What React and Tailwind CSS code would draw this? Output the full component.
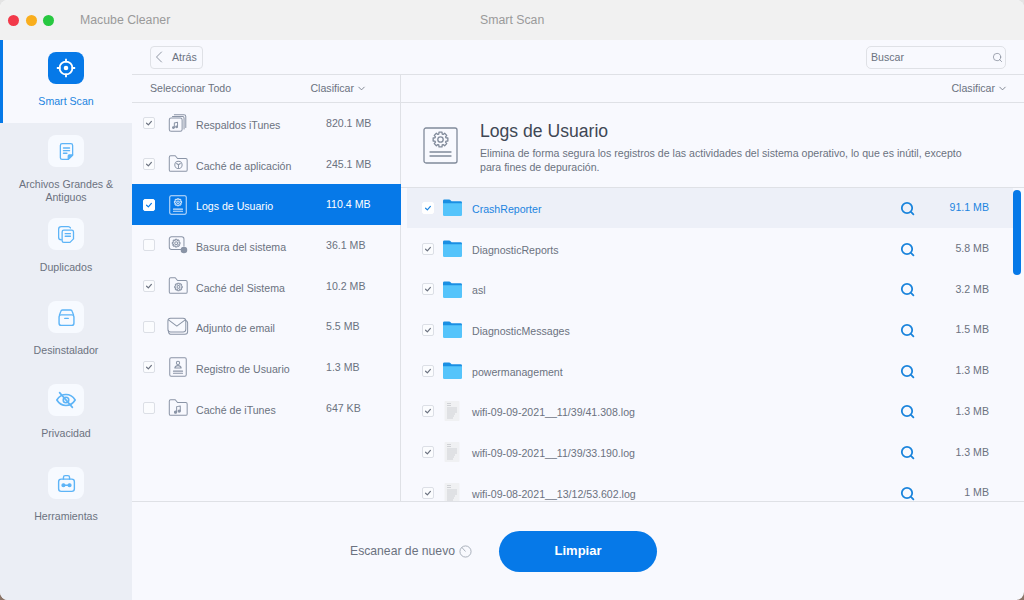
import { ChevronLeft, ChevronDown, Search } from 'lucide-react'

function Stroke({ children, size = 22, color = '#8a94a6', sw = 1.1, box = 24 }) {
  return (
    <svg width={size} height={size} viewBox={`0 0 ${box} ${box}`} fill="none" stroke={color} strokeWidth={sw} strokeLinecap="round" strokeLinejoin="round">
      {children}
    </svg>
  )
}

// outline of a small cog, eight teeth
function gearPath(cx, cy, r) {
  const pts = []
  for (let i = 0; i < 8; i++) {
    const a = (i * Math.PI) / 4
    const steps = [[-0.3, 0.76], [-0.2, 1], [0.2, 1], [0.3, 0.76]]
    steps.forEach(([da, k]) => {
      pts.push(`${(cx + Math.cos(a + da) * r * k).toFixed(2)} ${(cy + Math.sin(a + da) * r * k).toFixed(2)}`)
    })
  }
  return `M${pts.join('L')}Z`
}

const Gear = ({ cx = 12, cy = 10, r = 4 }) => (
  <g>
    <path d={gearPath(cx, cy, r)} />
    <circle cx={cx} cy={cy} r={r * 0.36} />
  </g>
)

const FolderLine = () => (
  <path d="M2.5 4.5A1.5 1.5 0 0 1 4 3h5l2.5 3h9A1.5 1.5 0 0 1 22 7.5v11a1.5 1.5 0 0 1-1.5 1.5H4a1.5 1.5 0 0 1-1.5-1.5z" />
)

const listIcons = {
  itunes: c => (
    <Stroke color={c}>
      <path d="M8 3h10.5a2 2 0 0 1 2 2v12" />
      <path d="M6 5h11a1.6 1.6 0 0 1 1.6 1.6v12" />
      <rect x="2.5" y="6.5" width="14" height="14.5" rx="2" />
      <path d="M8 17v-5l3.5-.8v5" />
      <circle cx="7" cy="17" r="1" fill={c} />
      <circle cx="10.5" cy="16.2" r="1" fill={c} />
    </Stroke>
  ),
  appcache: c => (
    <Stroke color={c}>
      <FolderLine />
      <circle cx="12.5" cy="13" r="4" />
      <path d="M10.5 11.5l2 1.3 2-1.3M12.5 12.8v3" />
    </Stroke>
  ),
  logs: c => (
    <Stroke color={c}>
      <rect x="3" y="2" width="18" height="20" rx="1.5" />
      <Gear cx={12} cy={9} r={4} />
      <path d="M7 16.5h10M7 18.8h10" />
    </Stroke>
  ),
  trash: c => (
    <Stroke color={c}>
      <path d="M15 17H5a2.5 2.5 0 0 1-2.5-2.5v-9A2.5 2.5 0 0 1 5 3h11a2.5 2.5 0 0 1 2.5 2.5V13" />
      <Gear cx={10} cy={10} r={4.3} />
      <circle cx="18.5" cy="17.5" r="3.6" fill={c} stroke="none" />
    </Stroke>
  ),
  syscache: c => (
    <Stroke color={c}>
      <FolderLine />
      <Gear cx={12.5} cy={13} r={4.2} />
    </Stroke>
  ),
  mail: c => (
    <Stroke color={c} size={25} sw={1.1}>
      <rect x="1" y="3" width="19.5" height="15" rx="3" />
      <path d="M2 5l8.700 6.5L19.5 5" />
      <path d="M1.5 16.5c0 2.5 1.5 4 3.5 4h14.5a3 3 0 0 0 3-3V8a3 3 0 0 0-2-2.5" />
    </Stroke>
  ),
  user: c => (
    <Stroke color={c}>
      <rect x="3" y="2" width="18" height="20" rx="1.5" />
      <circle cx="12" cy="7.5" r="1.8" />
      <path d="M8.5 13c.5-2 2-2.5 3.5-2.5s3 .5 3.5 2.5z" />
      <path d="M7 16.5h10M7 18.8h10" />
    </Stroke>
  ),
  itcache: c => (
    <Stroke color={c}>
      <FolderLine />
      <path d="M10.5 16.5v-6l4-.8v5.6" />
      <circle cx="9.3" cy="16.5" r="1.2" fill={c} />
      <circle cx="13.3" cy="15.3" r="1.2" fill={c} />
    </Stroke>
  ),
}

const categories = [
  { name: 'Respaldos iTunes', size: '820.1 MB', icon: 'itunes', on: true },
  { name: 'Caché de aplicación', size: '245.1 MB', icon: 'appcache', on: true },
  { name: 'Logs de Usuario', size: '110.4 MB', icon: 'logs', on: true, active: true },
  { name: 'Basura del sistema', size: '36.1 MB', icon: 'trash', on: false },
  { name: 'Caché del Sistema', size: '10.2 MB', icon: 'syscache', on: true },
  { name: 'Adjunto de email', size: '5.5 MB', icon: 'mail', on: false },
  { name: 'Registro de Usuario', size: '1.3 MB', icon: 'user', on: true },
  { name: 'Caché de iTunes', size: '647 KB', icon: 'itcache', on: false },
]

const files = [
  { name: 'CrashReporter', size: '91.1 MB', folder: true, active: true },
  { name: 'DiagnosticReports', size: '5.8 MB', folder: true },
  { name: 'asl', size: '3.2 MB', folder: true },
  { name: 'DiagnosticMessages', size: '1.5 MB', folder: true },
  { name: 'powermanagement', size: '1.3 MB', folder: true },
  { name: 'wifi-09-09-2021__11/39/41.308.log', size: '1.3 MB' },
  { name: 'wifi-09-09-2021__11/39/33.190.log', size: '1.3 MB' },
  { name: 'wifi-09-08-2021__13/12/53.602.log', size: '1 MB' },
]

const blue = '#5db4f7'

const navIcons = {
  large: (
    <Stroke color={blue} size={21} sw={1.5}>
      <path d="M5 5a2 2 0 0 1 2-2h10a2 2 0 0 1 2 2v11l-5 5H7a2 2 0 0 1-2-2z" />
      <path d="M8.5 8h7M8.5 11h7M8.5 14h4" />
      <path d="M14 21v-4a1 1 0 0 1 1-1h4z" fill={blue} />
    </Stroke>
  ),
  dup: (
    <Stroke color={blue} size={21} sw={1.5}>
      <path d="M6 18a3 3 0 0 1-3-3V6a3 3 0 0 1 3-3h8a3 3 0 0 1 2.5 1.5" />
      <path d="M7 9a2 2 0 0 1 2-2h9a2 2 0 0 1 2 2v8l-4 4H9a2 2 0 0 1-2-2z" />
      <path d="M10.5 11h6M10.5 14h6" />
    </Stroke>
  ),
  box: (
    <Stroke color={blue} size={21} sw={1.6}>
      <path d="M4 9l1.5-4a2 2 0 0 1 2-1.5h9a2 2 0 0 1 2 1.5L20 9" />
      <rect x="3.5" y="9" width="17" height="12" rx="2.5" />
      <path d="M10 13h4" />
    </Stroke>
  ),
  eye: (
    <Stroke color={blue} size={22} sw={1.8}>
      <path d="M2 12c2.5-4 6-6 10-6s7.5 2 10 6c-2.5 4-6 6-10 6s-7.5-2-10-6z" />
      <circle cx="12" cy="12" r="3" />
      <path d="M5 4l14 16" />
    </Stroke>
  ),
  tools: (
    <Stroke color={blue} size={21} sw={1.6}>
      <rect x="3" y="7" width="18" height="14" rx="3" />
      <path d="M8.5 7V5a2 2 0 0 1 2-2h3a2 2 0 0 1 2 2v2" />
      <circle cx="8.5" cy="14" r="1.6" fill={blue} />
      <circle cx="15.5" cy="14" r="1.6" fill={blue} />
      <path d="M10 14h4" />
    </Stroke>
  ),
}

const nav = [
  { label: 'Archivos Grandes & Antiguos', icon: navIcons.large },
  { label: 'Duplicados', icon: navIcons.dup },
  { label: 'Desinstalador', icon: navIcons.box },
  { label: 'Privacidad', icon: navIcons.eye },
  { label: 'Herramientas', icon: navIcons.tools },
]

function Check({ on, tone = 'gray', color }) {
  const box = tone === 'white' ? 'bg-white border-white' : 'bg-[#fbfcfe] border-[#dcdfe6]'
  return (
    <span className={`flex h-3 w-3 shrink-0 items-center justify-center rounded-[2px] border ${box}`}>
      {on && (
        <svg width="8" height="8" viewBox="0 0 10 10" fill="none" stroke={color || '#6b7280'} strokeWidth="1.5" strokeLinecap="round" strokeLinejoin="round">
          <path d="M2 5.3l2.2 2L8 3" />
        </svg>
      )}
    </span>
  )
}

function Folder() {
  return (
    <svg width="19" height="19" viewBox="0 0 20 19">
      <path d="M0 2.5A1.5 1.5 0 0 1 1.5 1h5a1.5 1.5 0 0 1 1.2.6L9 3h9.5A1.5 1.5 0 0 1 20 4.5V8H0z" fill="#1a8fe3" />
      <path d="M0 5h20v12.2a1.3 1.3 0 0 1-1.3 1.3H1.3A1.3 1.3 0 0 1 0 17.2z" fill="#55c4fb" />
    </svg>
  )
}

function LogFile() {
  return (
    <svg width="16" height="20" viewBox="0 0 16 20">
      <rect x="0.5" y="0" width="15" height="20" rx="1" fill="#f0f1f3" />
      <path d="M3 2.5h4M3 4.5h4M3 7h10M3 9h10M3 11h10M3 13h8M3 15h7M3 17h6" stroke="#cfd1d5" strokeWidth="1" />
    </svg>
  )
}

function Lens() {
  return (
    <svg className="mt-[1px]" width="15" height="15" viewBox="0 0 15 15" fill="none" stroke="#1a84dc" strokeWidth="1.8" strokeLinecap="round">
      <circle cx="7" cy="7" r="5.2" />
      <path d="M11.2 11.2l2.2 2.2" />
    </svg>
  )
}

function SortLabel() {
  return (
    <span className="flex items-center gap-[2px]">
      Clasificar <ChevronDown size={11} strokeWidth={1.8} />
    </span>
  )
}

export default function App() {
  return (
    <div className="bg-gradient-to-b from-[#e4e4e4] from-50% to-[#8a7468] to-50%">
      <div className='flex h-[600px] w-[1024px] flex-col overflow-hidden rounded-[8px] bg-[#f8f9fe] font-["Liberation_Sans",Arial,sans-serif] text-[10.6px] text-[#6b7280]'>
        <div className="relative flex h-10 shrink-0 items-center bg-[#f1f1f1] pl-[8px]">
          <div className="flex gap-[6.5px]">
            <span className="h-[11px] w-[11px] rounded-full bg-[#f2394a]" />
            <span className="h-[11px] w-[11px] rounded-full bg-[#f9ae1d]" />
            <span className="h-[11px] w-[11px] rounded-full bg-[#27c840]" />
          </div>
          <span className="ml-[26px] text-[12.3px] text-[#9a9a9a]">Macube Cleaner</span>
          <span className="absolute left-[480px] text-[12.3px] text-[#9a9a9a]">Smart Scan</span>
        </div>

        <div className="flex min-h-0 flex-1">
          <aside className="w-[132px] shrink-0 bg-[#ebeef5]">
            <div className="flex h-[83px] flex-col items-center border-l-[3px] border-[#0679e8] bg-[#f8f9fe] pr-[3px] pt-3">
              <span className="flex h-8 w-9 items-center justify-center rounded-lg bg-[#0679e8]">
                <svg width="22" height="22" viewBox="0 0 24 24" fill="none" stroke="#fff" strokeWidth="2">
                  <circle cx="12" cy="12" r="7" />
                  <circle cx="12" cy="12" r="2.5" fill="#fff" stroke="none" />
                  <path d="M12 2v4M12 18v4M2 12h4M18 12h4" />
                </svg>
              </span>
              <span className="mt-[11px] leading-[13px] text-[#1b84e0]">Smart Scan</span>
            </div>
            {nav.map(item => (
              <div key={item.label} className="flex h-[83px] flex-col items-center pt-3">
                <span className="flex h-8 w-9 shrink-0 items-center justify-center rounded-lg bg-[#f7faff]">{item.icon}</span>
                <span className="mt-[11px] w-[110px] text-center leading-[13px]">{item.label}</span>
              </div>
            ))}
          </aside>

          <div className="flex min-w-0 flex-1 flex-col">
            <div className="flex h-[35px] shrink-0 items-center justify-between border-b border-[#dfe1e6] px-[18px]">
              <button className="flex h-[23px] w-[53px] items-center gap-[3px] rounded border border-[#dfe1e6]">
                <ChevronLeft size={20} strokeWidth={1} color="#7a8290" className="-ml-[2px]" />
                <span className="mt-[1px]">Atrás</span>
              </button>
              <div className="flex h-[23px] w-[140px] items-center justify-between rounded-[5px] border border-[#dfe1e6] pl-[4px] pr-[2px]">
                <span className="mt-[1px]">Buscar</span>
                <Search size={11} strokeWidth={1.5} color="#7a8290" />
              </div>
            </div>

            <div className="flex min-h-0 flex-1">
              <div className="w-[269px] shrink-0 border-r border-[#dfe1e6]">
                <div className="flex h-[28px] items-center justify-between border-b border-[#dfe1e6] pl-[18px] pr-[33px]">
                  <span>Seleccionar Todo</span>
                  <SortLabel />
                </div>
                {categories.map(c => (
                  <div key={c.name} className={`-mr-px flex h-[40.7px] items-center pl-[11px] ${c.active ? 'bg-[#0679e8] text-white' : ''}`}>
                    <Check on={c.on} tone={c.active ? 'white' : 'gray'} color={c.active ? '#0679e8' : undefined} />
                    <span className="ml-[12px] flex w-[22px] justify-center">{listIcons[c.icon](c.active ? '#cfe4fb' : '#8a94a6')}</span>
                    <span className="ml-[7px] mt-[5px] w-[130px]">{c.name}</span>
                    <span className="mt-[1px]">{c.size}</span>
                  </div>
                ))}
              </div>

              <div className="flex min-w-0 flex-1 flex-col">
                <div className="flex h-[28px] shrink-0 items-center justify-end border-b border-[#dfe1e6] pr-[16px]">
                  <SortLabel />
                </div>
                <div className="flex h-[84.5px] shrink-0 items-start border-b border-[#dfe1e6] pl-[22px]">
                  <svg className="mt-[24px] shrink-0" width="36" height="38" viewBox="0 0 36 38" fill="none" stroke="#808a9a" strokeWidth="1.3" strokeLinecap="round" strokeLinejoin="round">
                    <rect x="1" y="1" width="33" height="35" rx="2" />
                    <path d={gearPath(17.5, 12.5, 7.5)} />
                    <circle cx="17.5" cy="12.5" r="2.7" />
                    <path d="M7 25h21M7 29h21" />
                  </svg>
                  <div className="ml-[21px] mt-[18px] w-[500px]">
                    <div className="text-[17.6px] leading-[21px] text-[#3f4754]">Logs de Usuario</div>
                    <p className="mt-[4px] leading-[14px]">
                      Elimina de forma segura los registros de las actividades del sistema operativo, lo que es inútil, excepto para fines de depuración.
                    </p>
                  </div>
                </div>
                <div className="relative min-h-0 flex-1 overflow-hidden pl-[6px] pr-[11px]">
                  {files.map(f => (
                    <div key={f.name} className={`flex h-[40.7px] items-center pl-[15px] ${f.active ? 'bg-[#edf0f8]' : ''}`}>
                      <Check on tone={f.active ? 'white' : 'gray'} color={f.active ? '#1b84e0' : undefined} />
                      <span className="ml-[8px] flex w-[20px] justify-center">{f.folder ? <Folder /> : <LogFile />}</span>
                      <span className={`ml-[10px] mt-[4px] w-[428px] ${f.active ? 'text-[#1b84e0]' : ''}`}>{f.name}</span>
                      <Lens />
                      <span className={`ml-auto mt-[1px] pr-[24px] ${f.active ? 'text-[#1b84e0]' : ''}`}>{f.size}</span>
                    </div>
                  ))}
                  <span className="absolute right-[3px] top-[2px] h-[85px] w-[8px] rounded-full bg-[#0679e8]" />
                </div>
              </div>
            </div>

            <div className="flex h-[99px] shrink-0 items-center border-t border-[#dfe1e6] pl-[218px]">
              <span className="text-[12.2px]">Escanear de nuevo</span>
              <svg className="ml-[4px]" width="13" height="13" viewBox="0 0 14 14" fill="none" stroke="#9aa2ae" strokeWidth="0.9">
                <circle cx="7" cy="7" r="6" />
                <path d="M3 2.5L7 7" />
              </svg>
              <button className="ml-[27px] h-[41px] w-[158px] rounded-full bg-[#0679e8] text-[13px] font-bold text-white">Limpiar</button>
            </div>
          </div>
        </div>
      </div>
    </div>
  )
}
